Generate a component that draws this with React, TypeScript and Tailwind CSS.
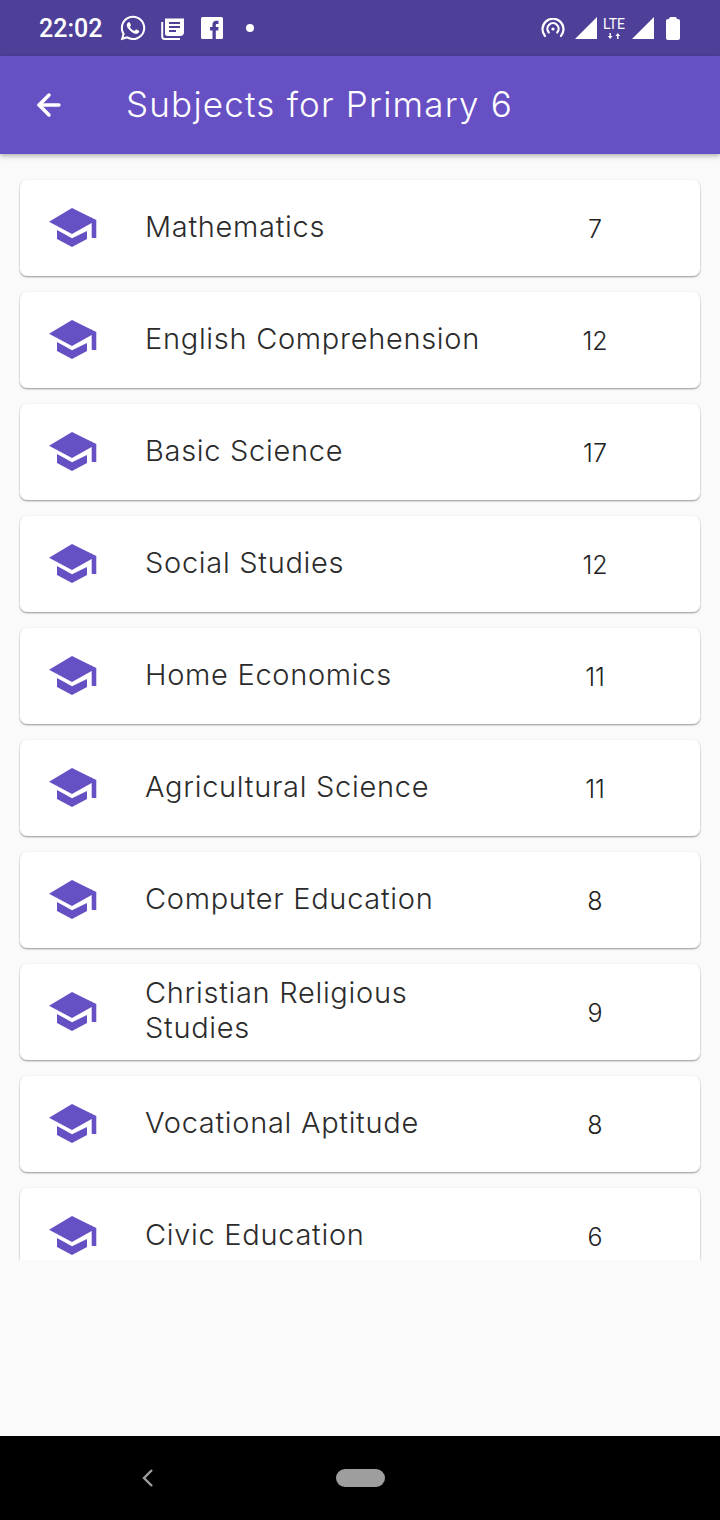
import { ArrowLeft } from 'lucide-react'
import { FaWhatsapp } from 'react-icons/fa'

const subjects = [
  { name: 'Mathematics', count: 7 },
  { name: 'English Comprehension', count: 12 },
  { name: 'Basic Science', count: 17 },
  { name: 'Social Studies', count: 12 },
  { name: 'Home Economics', count: 11 },
  { name: 'Agricultural Science', count: 11 },
  { name: 'Computer Education', count: 8 },
  { name: 'Christian Religious Studies', count: 9 },
  { name: 'Vocational Aptitude', count: 8 },
  { name: 'Civic Education', count: 6 },
]

function CapIcon() {
  return (
    <svg width="48" height="40" viewBox="50 208 48 40" className="shrink-0">
      <path d="M73 208 97.3 220V238H92.7V223L73 234 50 221.7Z" fill="#6750c4" />
      <path d="M58 230 73 238.3 88 231V239L73 247 58 239Z" fill="#6750c4" />
    </svg>
  )
}

function NewsIcon() {
  return (
    <svg width="24" height="23" viewBox="0 0 24 23" fill="none" className="ml-[14px]">
      <path d="M4 1.5H23V15a4 4 0 0 1-4 4H6.5A2.5 2.5 0 0 1 4 16.5Z" fill="white" />
      <path d="M8 6h11M8 10h11M8 14h7" stroke="#4e3f98" strokeWidth="2" />
      <path d="M1.2 5v14.5a2.5 2.5 0 0 0 2.5 2.5H19" stroke="white" strokeWidth="2" />
    </svg>
  )
}

function FacebookIcon() {
  return (
    <svg width="22" height="22" viewBox="0 0 22 22" className="ml-4">
      <rect width="22" height="22" rx="1.5" fill="white" />
      <path d="M11.500 22V13.500H9V10h2.500V7.800C11.500 5 13 3.800 15.300 3.800h2.200V7H16c-.9 0-1.200.4-1.200 1.200V10h2.800l-.4 3.500h-2.400V22Z" fill="#4e3f98" />
    </svg>
  )
}

function HotspotIcon() {
  return (
    <svg width="24" height="20" viewBox="0 0 24 20" fill="none" stroke="white" strokeWidth="2.2" strokeLinecap="round">
      <path d="M4 18a10.5 10.5 0 1 1 16 0" />
      <path d="M7.8 14.5a5.6 5.6 0 1 1 8.4 0" />
      <circle cx="12" cy="11" r="1.6" fill="white" stroke="none" />
    </svg>
  )
}

function SignalIcon({ className }: { className: string }) {
  return (
    <svg width="22" height="22" viewBox="0 0 22 22" className={className}>
      <path d="M22 0V22H0Z" fill="white" />
    </svg>
  )
}

function StatusBar() {
  return (
    <div className="flex h-14 items-center bg-[#4e3f98] pl-[39px] pr-10 text-white">
      <span className="w-[64px] font-['Roboto',sans-serif] text-[25px] font-medium leading-none">22:02</span>
      <FaWhatsapp className="ml-4 text-[28px]" />
      <NewsIcon />
      <FacebookIcon />
      <span className="ml-[23px] h-2 w-2 rounded-full bg-white" />
      <div className="ml-auto flex items-center">
        <HotspotIcon />
        <SignalIcon className="ml-[10px]" />
        <div className="ml-[6px] flex w-[22px] flex-col items-center gap-[3px] font-['Roboto',sans-serif] text-white">
          <span className="text-[14px] leading-[12px]">LTE</span>
          <svg width="14" height="6" viewBox="0 0 14 6" fill="white">
            <path d="M2.500 0h1.400v3h1.600L3.200 6 .9 3h1.600Z" />
            <path d="M10.100 6h1.400V3h1.600L10.800 0 8.500 3h1.600Z" />
          </svg>
        </div>
        <SignalIcon className="ml-[7px]" />
        <div className="ml-3 flex flex-col items-center">
          <span className="h-[2px] w-2 rounded-t-sm bg-white" />
          <span className="h-[21px] w-[14px] rounded-[2px] bg-white" />
        </div>
      </div>
    </div>
  )
}

function AppBar() {
  return (
    <header className="relative z-10 flex h-[98px] items-center bg-[#6750c4] pl-[32px] text-white shadow-[0_2px_5px_rgba(0,0,0,0.3)]">
      <ArrowLeft size={34} strokeWidth={2.5} />
      <h1 className="ml-[60px] -translate-y-px text-[35px] font-light leading-none tracking-[1.2px]">Subjects for Primary 6</h1>
    </header>
  )
}

function SubjectRow({ name, count }: { name: string; count: number }) {
  return (
    <div className="flex h-24 shrink-0 items-center rounded-[7px] bg-white pl-[29px] shadow-[0_1px_2px_rgba(0,0,0,0.42)]">
      <CapIcon />
      <span className="ml-[48px] w-[350px] -translate-y-[2px] text-[29px] font-light leading-[35px] tracking-[0.7px] text-[#2b2b2b]">{name}</span>
      <span className="ml-[65px] w-[70px] pt-[3px] text-center text-[25px] font-light leading-none text-[#222]">{count}</span>
    </div>
  )
}

export default function App() {
  return (
    <div className="flex h-[1520px] w-[720px] flex-col overflow-hidden bg-[#fafafa] font-['Inter',sans-serif]">
      <StatusBar />
      <AppBar />
      <main className="h-[1106px] overflow-hidden">
        <div className="flex flex-col gap-4 px-5 pt-[26px]">
          {subjects.map((s) => (
            <SubjectRow key={s.name} name={s.name} count={s.count} />
          ))}
        </div>
      </main>
      <div className="flex-1" />
      <nav className="flex h-[84px] items-center bg-black pl-[141px]">
        <svg width="14" height="20" viewBox="0 0 14 20" fill="none">
          <path d="M11 2 3 10l8 8" stroke="#9e9e9e" strokeWidth="2.4" />
        </svg>
        <span className="ml-[181px] h-[18px] w-[49px] rounded-full bg-[#9e9e9e]" />
      </nav>
    </div>
  )
}
